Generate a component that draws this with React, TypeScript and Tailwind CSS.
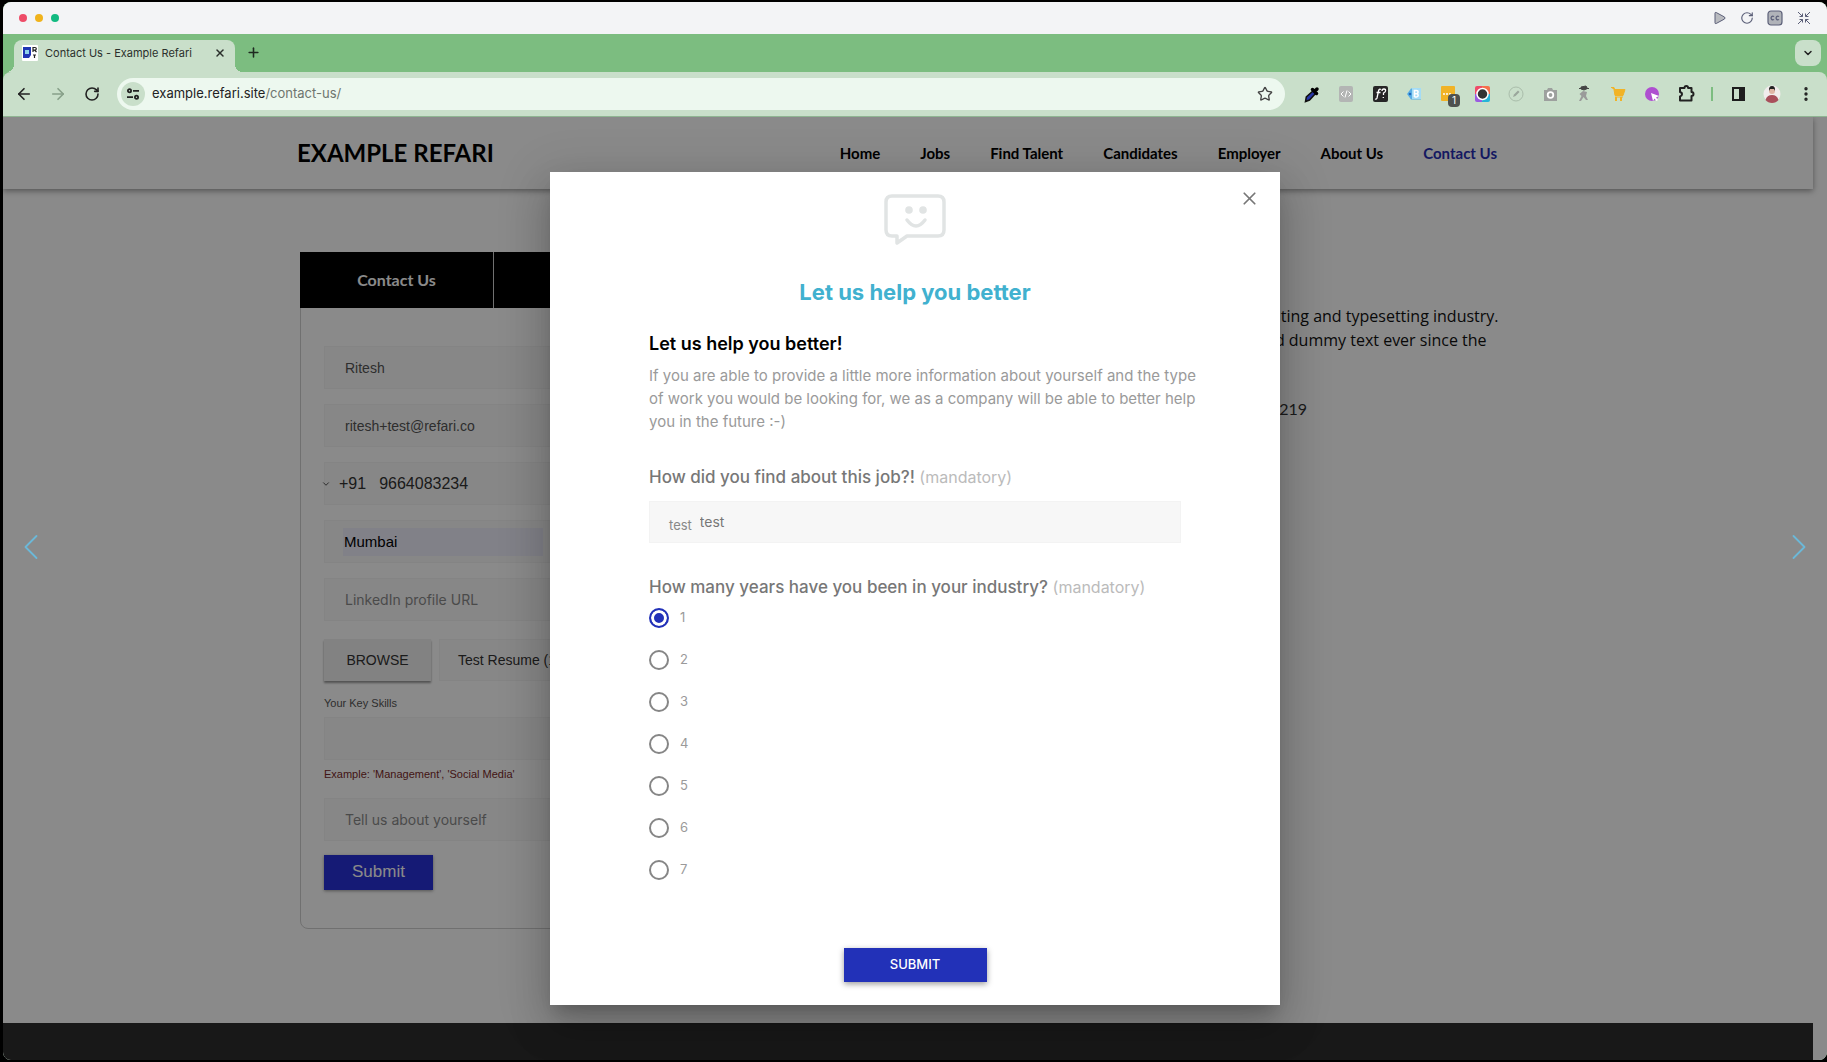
import type { ReactNode } from 'react';
import {
  ArrowLeft,
  ArrowRight,
  ChevronDown,
  ChevronLeft,
  ChevronRight,
  EllipsisVertical,
  Plus,
  RotateCw,
  Star,
  X,
} from 'lucide-react';

const navLinks = ['Home', 'Jobs', 'Find Talent', 'Candidates', 'Employer', 'About Us', 'Contact Us'];
const years = ['1', '2', '3', '4', '5', '6', '7'];

function TitleBar() {
  return (
    <div className="flex h-8 shrink-0 items-center justify-between bg-[#f3f4f6] pr-[15px] pl-4 text-[#5b5f78]">
      <div className="flex gap-2">
        <span className="size-2 rounded-full bg-[#ee4c68]" />
        <span className="size-2 rounded-full bg-[#f0b31c]" />
        <span className="size-2 rounded-full bg-[#12ba81]" />
      </div>
      <div className="flex items-center gap-[13px]">
        <button aria-label="Play">
          <svg width="14" height="14" viewBox="0 0 14 14" fill="#b9bbc0" stroke="currentColor" strokeLinejoin="round">
            <path d="M2 2.2Q2 1 3.2 1.5L11.5 6Q12.5 7 11.5 8L3.2 12.5Q2 13 2 11.8Z" />
          </svg>
        </button>
        <button aria-label="Restart">
          <RotateCw size={14} strokeWidth={2} />
        </button>
        <button aria-label="Captions">
          <svg width="16" height="16" viewBox="0 0 16 16" fill="none" stroke="currentColor" strokeWidth="1.2">
            <rect x="1" y="1" width="14" height="14" rx="3" fill="#b0b3b9" />
            <path d="M7 6.6a1.8 1.8 0 1 0 0 2.8M12 6.6a1.8 1.8 0 1 0 0 2.8" />
          </svg>
        </button>
        <button aria-label="Exit full screen">
          <svg width="16" height="16" viewBox="0 0 16 16" fill="none" stroke="currentColor">
            <path d="M2 2l4.5 4.5M3.500 6.500h3v-3M14 2L9.500 6.500M12.500 6.500h-3v-3M2 14l4.500-4.500M3.500 9.500h3v3M14 14L9.500 9.500M12.500 9.500h-3v3" />
          </svg>
        </button>
      </div>
    </div>
  );
}

function TabStrip() {
  return (
    <div className="flex h-[38px] shrink-0 items-end bg-[#7cbd80] pr-[6px] pl-[11px]">
      <div className="relative flex h-8 w-[221px] items-center rounded-t-lg bg-[#c9dfca] pr-[9px] pb-[6px] pl-2 text-[#2b302c]">
        {/* flared feet of the active tab */}
        <span className="absolute bottom-0 -left-2 size-2 bg-[radial-gradient(circle_at_0_0,transparent_8px,#c9dfca_8px)]" />
        <span className="absolute -right-2 bottom-0 size-2 bg-[radial-gradient(circle_at_100%_0,transparent_8px,#c9dfca_8px)]" />
        <svg width="16" height="16" viewBox="0 0 16 16">
          <rect width="16" height="16" rx="1" fill="#fff" />
          <path d="M1 2h8v8l-2 3H1z" fill="#2035b4" />
          <path d="M3 5h4v4H3z" fill="#8ed3ea" />
          <path d="M11 7V2.500h2a1.300 1.300 0 0 1 0 2.600h-2m1.500 0L14.500 7M11 10h3M12.500 10v3" fill="none" stroke="#222" strokeWidth="1.200" />
        </svg>
        <span className="ml-[7px] text-[11px]">Contact Us - Example Refari</span>
        <button aria-label="Close tab" className="ml-auto">
          <X size={12} strokeWidth={3} />
        </button>
      </div>
      <button aria-label="New tab" className="mb-3 ml-[11px] text-[#1f2a20]">
        <Plus size={15} strokeWidth={2.5} />
      </button>
      <button
        aria-label="Search tabs"
        className="mb-[6px] ml-auto flex size-[26px] items-center justify-center rounded-lg bg-[#c9dfca] text-[#222]"
      >
        <ChevronDown size={12} strokeWidth={3} />
      </button>
    </div>
  );
}

function ExtensionButton({ label, children }: { label: string; children: ReactNode }) {
  return (
    <button aria-label={label}>
      <svg width="18" height="18" viewBox="0 0 18 18" className="overflow-visible">
        {children}
      </svg>
    </button>
  );
}

function Extensions() {
  return (
    <div className="ml-0.5 flex shrink-0 items-center gap-4">
      <ExtensionButton label="Color picker">
        <path d="M10.500 5.500l2.500 2.500-6.500 7-4 1.500.8-4.500z" fill="#2636a8" stroke="#111" strokeWidth="1.500" />
        <path d="M9.500 4.500l4 4M12 6l2-2" stroke="#000" strokeWidth="3.500" strokeLinecap="round" />
      </ExtensionButton>
      <ExtensionButton label="Source viewer">
        <rect x="2" y="1" width="14" height="16" rx="2" fill="#b3b5b4" />
        <path d="M6.500 6.500L4 9l2.500 2.500M11.500 6.500L14 9l-2.500 2.500M10 5.500l-2 7" fill="none" stroke="#fff" />
      </ExtensionButton>
      <ExtensionButton label="Font finder">
        <rect x="2" y="1" width="15" height="16" rx="2" fill="#262626" />
        <path
          d="M10 4.500Q8 3.500 7.500 6L6 13q-.4 1.500-2 1M5.500 7.500h4M11 6q0-2 2-2t1.500 2q0 1-2 2v2M12.300 12v1"
          fill="none"
          stroke="#fff"
          strokeWidth="1.300"
        />
      </ExtensionButton>
      <ExtensionButton label="Tag manager">
        <path d="M2 9l4-5.500h10v11H6z" fill="#58aee6" />
        <path d="M7 3h9v11H7z" fill="#a5dcf5" />
        <path d="M9.500 12v-6.500h2a1.600 1.600 0 0 1 0 3.200h-2m2 0a1.600 1.600 0 0 1 0 3.300h-2" fill="none" stroke="#fff" strokeWidth="1.600" />
        <circle cx="5" cy="9" r="1.300" fill="#2168b8" />
      </ExtensionButton>
      <ExtensionButton label="Clipboard, 1 item">
        <rect x="2" y="1" width="14" height="15" rx="1" fill="#f1b326" />
        <path d="M4 9h8" stroke="#fff" strokeWidth="1.500" strokeDasharray="2 1" />
        <rect x="9" y="9" width="12" height="13" rx="4" fill="#4e524f" />
        <text x="15" y="19" fill="#fff" fontSize="10" textAnchor="middle">
          1
        </text>
      </ExtensionButton>
      <ExtensionButton label="Screen recorder">
        <path d="M9 1H4a2 2 0 0 0-2 2v6h7z" fill="#ef4b69" />
        <path d="M9 1h6a2 2 0 0 1 2 2v6H9z" fill="#f5704b" />
        <path d="M9 17H4a2 2 0 0 1-2-2V9h7z" fill="#9a5be0" />
        <path d="M9 17h6a2 2 0 0 0 2-2V9H9z" fill="#25b4d8" />
        <circle cx="9.500" cy="9" r="5.500" fill="#333" stroke="#fff" strokeWidth="1.500" />
      </ExtensionButton>
      <ExtensionButton label="Page editor">
        <circle cx="9" cy="9" r="7" fill="none" stroke="#a9bdaa" />
        <path d="M6 12l1-2.500 4-4 1.500 1.500-4 4z" fill="#9aa69b" />
      </ExtensionButton>
      <ExtensionButton label="Screenshot">
        <path d="M3 5h3l1-2h4l1 2h4v11H3z" fill="#9da09e" />
        <circle cx="9.500" cy="10" r="2.800" fill="none" stroke="#fff" strokeWidth="1.800" />
      </ExtensionButton>
      <ExtensionButton label="Incognito helper">
        <path d="M4 3.500h10M6 2l5-1 1.500 2.500-3.500 1.500-3-1z" fill="#444" stroke="#444" />
        <path d="M8 6l4 1-1 4 2 4h-2l-2.500-3L6 16H4l2.500-5-2-2z" fill="#9a9a9a" />
      </ExtensionButton>
      <ExtensionButton label="Shopping cart">
        <path d="M2 2.500h3l1 3M5 4.500h11l-2 6H6zM6 12h8" fill="#f1b326" stroke="#f1b326" />
        <path d="M7 12v4M12 12v4" stroke="#f1b326" strokeWidth="2" />
      </ExtensionButton>
      <ExtensionButton label="Click tracker">
        <circle cx="9" cy="9" r="7" fill="#ae4fd0" />
        <path d="M8 8l8 3-3 1.500 2 2.500-1.500 1-2-2.500L10 16z" fill="#fff" />
      </ExtensionButton>
      <ExtensionButton label="Extensions">
        <path
          d="M3 3h4.500q0-2 1.800-2t1.800 2h3.400v4q2 0 2 2t-2 2v4.500H3v-4q2-.5 2-2.300T3 7z"
          fill="none"
          stroke="#222"
          strokeWidth="2"
          strokeLinejoin="round"
        />
      </ExtensionButton>
      <span className="h-[14px] w-0.5 bg-[#7cbd80]" />
      <ExtensionButton label="Side panel">
        <rect x="4" y="3" width="11" height="12" fill="none" stroke="#1d1d1d" strokeWidth="2" />
        <path d="M10 3h5v12h-5z" fill="#1d1d1d" />
      </ExtensionButton>
      <ExtensionButton label="Profile">
        <circle cx="9" cy="9" r="8.500" fill="#f1ecec" />
        <path d="M2.500 15Q4 10 9 10t6.500 5Q13 18 9 18t-6.500-3z" fill="#a94f5b" />
        <circle cx="9" cy="6" r="3" fill="#e0b6a6" />
        <path d="M6 6q-.5-5 3-5t3 5L11 4H7z" fill="#222" />
      </ExtensionButton>
      <button aria-label="Menu" className="text-[#222]">
        <EllipsisVertical size={18} strokeWidth={2.5} />
      </button>
    </div>
  );
}

function Toolbar() {
  return (
    <div className="flex h-[45px] shrink-0 items-center gap-4 rounded-t-lg border-b border-[#8fb592] bg-[#c9dfca] px-3 text-[#222]">
      <button aria-label="Back">
        <ArrowLeft size={18} strokeWidth={2.2} />
      </button>
      <button aria-label="Forward" className="text-[#87a089]">
        <ArrowRight size={18} strokeWidth={2.2} />
      </button>
      <button aria-label="Reload">
        <RotateCw size={18} strokeWidth={2.4} className="p-px" />
      </button>
      <div className="flex h-8 flex-1 items-center rounded-full bg-[#edf8ef] pr-3 pl-1">
        <button aria-label="Site information" className="flex size-6 items-center justify-center rounded-full bg-[#c9dfca]">
          <svg width="14" height="14" viewBox="0 0 14 14" fill="none" stroke="#222" strokeWidth="1.800">
            <circle cx="3.500" cy="3.800" r="1.600" />
            <circle cx="10.500" cy="10.200" r="1.600" />
            <path d="M7 3.800h6M1 10.200h6" />
          </svg>
        </button>
        <p className="ml-[7px] flex-1 text-[13px]">
          example.refari.site<span className="text-[#6d756e]">/contact-us/</span>
        </p>
        <button aria-label="Bookmark" className="text-[#444]">
          <Star size={16} />
        </button>
      </div>
      <Extensions />
    </div>
  );
}

function SiteHeader() {
  return (
    <header className="mr-[14px] bg-white font-['Lato',sans-serif] shadow-[0_2px_6px_rgba(0,0,0,0.4)]">
      <div className="mx-auto flex h-[72px] max-w-[1222px] items-center justify-between pr-[22px]">
        <a href="#" className="text-2xl font-bold text-black">
          EXAMPLE REFARI
        </a>
        <nav className="flex gap-10 text-[15px] font-bold text-black">
          {navLinks.map((link) => (
            <a key={link} href="#" className="last:text-[#272fb4]">
              {link}
            </a>
          ))}
        </nav>
      </div>
    </header>
  );
}

const field = 'h-[43px] w-full border border-[#f4f4f4] bg-[#fafafa] pl-5';

function ContactForm() {
  return (
    <form className="w-[582px] self-start rounded-b-lg border border-[#d0d0d0] font-['Liberation_Sans',sans-serif] text-sm text-[#555]">
      <div className="-mx-px -mt-px grid h-14 grid-cols-3 divide-x divide-[#d0d0d0] bg-black font-['Lato',sans-serif] text-base font-bold text-white">
        <button type="button">Contact Us</button>
        <button type="button">Register</button>
        <button type="button">Refer</button>
      </div>
      <div className="px-[23px] pt-[38px] pb-[38px]">
        <div className="flex flex-col gap-[15px]">
          <input aria-label="Name" defaultValue="Ritesh" className={field} />
          <input aria-label="Email" defaultValue="ritesh+test@refari.co" className={field} />
          <div className="flex h-[43px] items-center border border-[#f4f4f4] bg-[#fafafa] text-base text-[#333]">
            <ChevronDown size={10} className="-ml-1 shrink-0" />
            <span className="ml-2">+91</span>
            <input aria-label="Phone" defaultValue="9664083234" className="ml-[13px] flex-1" />
          </div>
          <div className="flex h-[43px] items-center border border-[#f4f4f4] bg-[#fafafa] pr-5 pl-[18px]">
            <input aria-label="City" defaultValue="Mumbai" className="h-7 w-[200px] bg-[#eeeefc] pl-px text-[15px] text-black" />
          </div>
          <input
            aria-label="LinkedIn"
            placeholder="LinkedIn profile URL"
            className="h-[43px] w-full border border-[#f4f4f4] bg-[#fafafa] pl-5 font-['Inter',sans-serif] placeholder:text-[#8a8a8a]"
          />
        </div>
        <div className="mt-[18px] flex gap-2">
          <button type="button" className="h-[42px] w-[107px] bg-[#f0f0f0] text-[#333] shadow-[0_2px_2px_rgba(0,0,0,0.4)]">
            BROWSE
          </button>
          <span className="flex flex-1 items-center border border-[#f4f4f4] bg-[#fafafa] pl-[18px] text-[#333]">
            Test Resume (1).pdf
          </span>
        </div>
        <label htmlFor="skills" className="mt-3 block text-[11px] leading-5">
          Your Key Skills
        </label>
        <input id="skills" className="mt-1 h-[43px] w-full border border-[#f4f4f4] bg-[#fafafa] pl-5" />
        <p className="mt-1 text-[11px] leading-5 text-[#7a2a2a]">Example: 'Management', 'Social Media'</p>
        <input
          aria-label="About"
          placeholder="Tell us about yourself"
          className="mt-[14px] h-[43px] w-full border border-[#f4f4f4] bg-[#fafafa] pl-5 font-['Inter',sans-serif] placeholder:text-[#8a8a8a]"
        />
        <button className="mt-[14px] block h-[35px] w-[109px] bg-[#2830d8] text-[17px] text-white shadow-[0_1px_3px_rgba(0,0,0,0.4)]">
          Submit
        </button>
      </div>
    </form>
  );
}

function ContactPage() {
  return (
    <div className="flex h-full flex-col bg-white">
      <SiteHeader />
      <main className="mr-[14px] flex flex-1 justify-center">
        <div className="flex w-full max-w-[1222px] justify-between gap-8 pt-[63px] pl-[3px]">
          <ContactForm />
          <div className="w-[582px] pt-[52px] font-['Open_Sans',sans-serif] text-base text-[#111]">
            <p>
              Lorem Ipsum is simply dummy text of the printing and typesetting industry. Lorem Ipsum has been the industry's
              standard dummy text ever since the
            </p>
            <p className="mt-[45px] font-['Lato',sans-serif] text-[#333]">
              <span className="inline-block w-[370px] text-right">+91 22 4890 1219</span>
            </p>
          </div>
        </div>
      </main>
      <footer className="mr-[14px] h-[37px] bg-[#2e2e2e]" />
    </div>
  );
}

function QuestionsDialog() {
  return (
    <div
      role="dialog"
      aria-modal="true"
      aria-label="Let us help you better"
      className="relative w-[730px] bg-white px-[99px] pt-[22px] pb-[23px] text-[#9a9a9a] shadow-[0_11px_15px_-7px_rgba(0,0,0,0.2),0_24px_38px_3px_rgba(0,0,0,0.14),0_9px_46px_8px_rgba(0,0,0,0.12)]"
    >
      <button aria-label="Close" className="absolute top-4 right-5 text-[#777]">
        <X size={21} strokeWidth={2} />
      </button>
      <svg width="62" height="52" viewBox="0 0 62 52" fill="none" stroke="#e1e4e4" strokeWidth="3.500" className="mx-auto">
        <path d="M8 2h46q6 0 6 6v28q0 6-6 6H23l-10 7v-7H8q-6 0-6-6V8q0-6 6-6z" strokeLinejoin="round" />
        <circle cx="25" cy="16" r="3.800" fill="#e1e4e4" stroke="none" />
        <circle cx="39" cy="16" r="3.800" fill="#e1e4e4" stroke="none" />
        <path d="M23 26q9 12 18 0" strokeLinecap="round" />
      </svg>
      <h2 className="mt-[30px] text-center text-[22px] leading-8 font-bold text-[#41b1cf]">Let us help you better</h2>
      <h3 className="mt-6 text-lg leading-6 font-semibold text-black">Let us help you better!</h3>
      <p className="mt-2 -mr-4 text-[15px] leading-[23px]">
        If you are able to provide a little more information about yourself and the type of work you would be looking for, we as
        a company will be able to better help you in the future :-)
      </p>
      <form>
        <label htmlFor="source" className="mt-8 block text-[17px] leading-6 font-medium text-[#777]">
          How did you find about this job?! <span className="text-base leading-6 font-normal text-[#bbb]">(mandatory)</span>
        </label>
        <div className="mt-3 flex h-[42px] items-center border border-[#f3f3f3] bg-[#f7f7f7] pl-[19px]">
          <span className="pt-2 text-[13px] text-[#888]">test</span>
          <input id="source" defaultValue="test" className="ml-2 flex-1 text-sm text-[#777]" />
        </div>
        <fieldset className="mt-8">
          <legend className="text-[17px] leading-6 font-medium text-[#777]">
            How many years have you been in your industry?{' '}
            <span className="text-base leading-6 font-normal text-[#bbb]">(mandatory)</span>
          </legend>
          <div className="flex flex-col items-start gap-1">
            {years.map((year) => (
              <label key={year} className="flex h-[38px] items-center gap-[11px] text-[13px]">
                <input
                  type="radio"
                  name="years"
                  defaultChecked={year === '1'}
                  className="size-5 appearance-none rounded-full border-2 border-[#868686] checked:border-[#2231b8] checked:bg-[#2231b8] checked:shadow-[inset_0_0_0_3px_#fff]"
                />
                {year}
              </label>
            ))}
          </div>
        </fieldset>
        <button
          type="button"
          className="mx-auto mt-[59px] block h-[34px] w-[143px] bg-[#2231b8] text-[13px] font-medium text-white shadow-[0_2px_6px_rgba(0,0,0,0.4)]"
        >
          SUBMIT
        </button>
      </form>
    </div>
  );
}

export default function App() {
  return (
    <div className="h-screen bg-black py-0.5 pl-[3px] font-['Inter',sans-serif]">
      <div className="flex h-full flex-col overflow-hidden rounded-lg bg-[#7cbd80]">
        <TitleBar />
        <TabStrip />
        <Toolbar />
        <div className="relative min-h-0 flex-1 overflow-hidden">
          <ContactPage />
          <div className="absolute inset-0 flex items-center justify-between bg-black/46 px-[6px]">
            <button aria-label="Previous" className="-mt-[84px] text-[#6bb8d8]">
              <ChevronLeft size={44} strokeWidth={1} />
            </button>
            <QuestionsDialog />
            <button aria-label="Next" className="-mt-[84px] text-[#6bb8d8]">
              <ChevronRight size={44} strokeWidth={1} />
            </button>
          </div>
        </div>
      </div>
    </div>
  );
}
